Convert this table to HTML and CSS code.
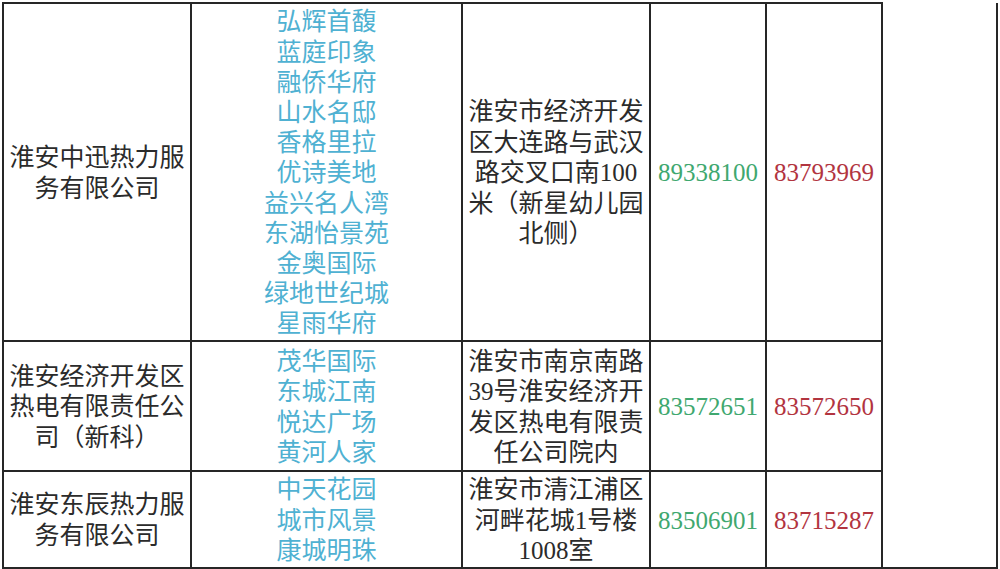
FILE: index.html
```html
<!DOCTYPE html>
<html lang="zh-CN">
<head>
<meta charset="utf-8">
<title>热力服务单位</title>
<link rel="stylesheet" href="styles.css">
</head>
<body>
<table class="grid">
  <colgroup>
    <col class="c-name">
    <col class="c-area">
    <col class="c-addr">
    <col class="c-tel">
    <col class="c-tel">
    <col class="c-blank">
  </colgroup>
  <tbody>
    <tr class="r1">
      <td class="cell">淮安中迅热力服<br>务有限公司</td>
      <td class="cell area long">弘辉首馥<br>蓝庭印象<br>融侨华府<br>山水名邸<br>香格里拉<br>优诗美地<br>益兴名人湾<br>东湖怡景苑<br>金奥国际<br>绿地世纪城<br>星雨华府</td>
      <td class="cell">淮安市经济开发<br>区大连路与武汉<br>路交叉口南100<br>米（新星幼儿园<br>北侧）</td>
      <td class="cell tel-a">89338100</td>
      <td class="cell tel-b">83793969</td>
      <td class="cell blank" rowspan="3"></td>
    </tr>
    <tr class="r2">
      <td class="cell">淮安经济开发区<br>热电有限责任公<br>司（新科）</td>
      <td class="cell area">茂华国际<br>东城江南<br>悦达广场<br>黄河人家</td>
      <td class="cell">淮安市南京南路<br>39号淮安经济开<br>发区热电有限责<br>任公司院内</td>
      <td class="cell tel-a">83572651</td>
      <td class="cell tel-b">83572650</td>
    </tr>
    <tr class="r3">
      <td class="cell">淮安东辰热力服<br>务有限公司</td>
      <td class="cell area">中天花园<br>城市风景<br>康城明珠</td>
      <td class="cell">淮安市清江浦区<br>河畔花城1号楼<br>1008室</td>
      <td class="cell tel-a">83506901</td>
      <td class="cell tel-b">83715287</td>
    </tr>
  </tbody>
</table>
</body>
</html>
```

FILE: styles.css
```css
html, body {
  margin: 0;
  padding: 0;
  background: #ffffff;
}

body {
  padding: 2px 0 0 2px;
}

.grid {
  border-collapse: collapse;
  table-layout: fixed;
  width: 996px;
  font-family: "Liberation Serif", "Noto Sans CJK SC", serif;
  font-size: 25px;
  line-height: 30.5px;
  color: #2b2b2b;
}

.c-name { width: 188px; }
.c-area { width: 271px; }
.c-addr { width: 188px; }
.c-tel { width: 116px; }
.c-blank { width: 115px; }

.cell {
  border: 2px solid #262626;
  padding: 3px 0 0 0;
  text-align: center;
  vertical-align: middle;
  white-space: nowrap;
}

.r1 { height: 338px; }
.r2 { height: 130px; }
.r3 { height: 95px; }

.area { color: #4fb1d2; }
.long { line-height: 30.2px; }
.tel-a { color: #3fa86f; }
.tel-b { color: #b2343f; }

.blank {
  border-top: none;
}
```
